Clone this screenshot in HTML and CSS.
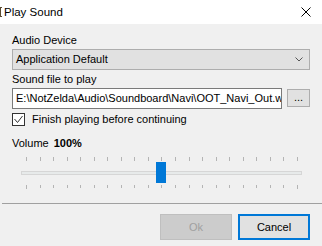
FILE: index.html
```html
<!DOCTYPE html>
<html>
<head>
<meta charset="utf-8">
<link rel="stylesheet" href="styles.css">
</head>
<body>
<div class="window">
  <div class="titlebar">
    <span class="app-icon"></span>
    <span class="title">Play Sound</span>
    <span class="close">
      <svg width="10" height="10" viewBox="0 0 10 10"><path d="M0.5 0.5 L9.5 9.5 M9.5 0.5 L0.5 9.5" stroke="#000" stroke-width="1" fill="none"/></svg>
    </span>
  </div>
  <div class="content">
    <div class="label first">Audio Device</div>
    <div class="combo">
      <span class="combo-text">Application Default</span>
      <svg class="chevron" width="8" height="5" viewBox="0 0 8 5"><path d="M0.5 0.5 L4 4 L7.5 0.5" stroke="#555" stroke-width="1" fill="none"/></svg>
    </div>
    <div class="label second">Sound file to play</div>
    <div class="file-row">
      <div class="textbox">E:\NotZelda\Audio\Soundboard\Navi\OOT_Navi_Out.wav</div>
      <div class="browse">...</div>
    </div>
    <div class="check">
      <span class="box"><svg width="11" height="11" viewBox="0 0 11 11"><path d="M1.5 5 L4.5 8.5 L9.5 2" stroke="#333" stroke-width="1" fill="none"/></svg></span>
      <span class="check-label">Finish playing before continuing</span>
    </div>
    <div class="volume"><span>Volume</span><b>100%</b></div>
    <div class="slider">
      <div class="ticks top">
        <i class="end"></i><i></i><i></i><i></i><i></i><i></i><i></i><i></i><i></i><i></i><i></i><i></i><i></i><i></i><i></i><i></i><i></i><i></i><i></i><i></i><i class="end"></i>
      </div>
      <div class="track"></div>
      <div class="ticks bottom">
        <i class="end"></i><i></i><i></i><i></i><i></i><i></i><i></i><i></i><i></i><i></i><i></i><i></i><i></i><i></i><i></i><i></i><i></i><i></i><i></i><i></i><i class="end"></i>
      </div>
      <div class="thumb"></div>
    </div>
  </div>
  <div class="separator"></div>
  <div class="buttons">
    <div class="btn disabled">Ok</div>
    <div class="btn default">Cancel</div>
  </div>
</div>
</body>
</html>
```
FILE: styles.css
```css
* { box-sizing: border-box; }
html, body { margin: 0; padding: 0; }
body {
  background: #f0f0f0;
  font-family: "Liberation Sans", Arial, sans-serif;
  font-size: 11px;
  line-height: 13px;
  color: #000;
  width: 322px;
  height: 246px;
  overflow: hidden;
}
.window { display: flex; flex-direction: column; }
.titlebar {
  height: 24px;
  background: #fff;
  display: flex;
  align-items: center;
}
.app-icon {
  width: 2px;
  height: 10px;
  border: 1px solid #5a4a30;
  border-right: none;
  margin-right: 2px;
  margin-top: -1px;
}
.title { font-size: 11.5px; flex: 1; }
.close {
  width: 10px; height: 10px;
  margin-right: 11px;
  margin-top: -1px;
  display: flex;
}
.content {
  padding: 0 12px;
  display: flex;
  flex-direction: column;
}
.label.first { margin-top: 10px; height: 13px; }
.label.second { margin-top: 3px; height: 13px; }
.combo {
  margin-top: 2px;
  height: 21px;
  background: #e1e1e1;
  border: 1px solid #adadad;
  display: flex;
  align-items: center;
  padding: 0 6px 0 3px;
}
.combo-text { flex: 1; }
.chevron { display: block; }
.file-row {
  margin-top: 2px;
  display: flex;
  align-items: flex-start;
}
.textbox {
  width: 270px;
  height: 21px;
  background: #fff;
  border: 1px solid #7a7a7a;
  padding: 0 0 0 3px;
  line-height: 19px;
  white-space: nowrap;
  overflow: hidden;
}
.browse {
  margin-left: 5px;
  margin-top: 1px;
  width: 23px;
  height: 18px;
  background: #e1e1e1;
  border: 1px solid #adadad;
  text-align: center;
  line-height: 15px;
}
.check {
  margin-top: 4px;
  display: flex;
  align-items: center;
  height: 13px;
}
.box {
  width: 13px; height: 13px;
  border: 1px solid #333;
  background: #fff;
  display: flex;
}
.check-label { margin-left: 7px; }
.volume {
  margin-top: 11px;
  display: flex;
  gap: 5px;
  height: 13px;
}
.volume b { font-weight: bold; }
.slider {
  position: relative;
  margin-top: 7px;
  height: 32px;
}
.ticks {
  display: flex;
  justify-content: space-between;
  margin-left: 14px;
  width: 272px;
  height: 4px;
}
.ticks i {
  display: block;
  width: 1px;
  height: 4px;
  background: #b4b4b4;
}
.ticks.bottom { margin-top: 10px; height: 4px; }
.ticks.bottom i { height: 3px; }
.ticks.bottom i.end { height: 4px; }
.track {
  margin-top: 10px;
  margin-left: 9px;
  width: 281px;
  height: 4px;
  border: 1px solid #d6d6d6;
  background: #e7eaea;
}
.thumb {
  position: absolute;
  left: 144px;
  top: 5px;
  width: 10px;
  height: 21px;
  background: #0078d7;
}
.separator {
  margin-top: 14px;
  margin-left: 2px;
  height: 1px;
  background: #a0a0a0;
}
.buttons {
  margin-top: 10px;
  display: flex;
  justify-content: flex-end;
  gap: 6px;
  padding-right: 12px;
}
.btn {
  width: 72px;
  height: 26px;
  display: flex;
  align-items: center;
  justify-content: center;
}
.btn.disabled {
  background: #cccccc;
  border: 1px solid #bfbfbf;
  color: #a0a0a0;
}
.btn.default {
  background: #e1e1e1;
  border: 2px solid #0078d7;
}
```
